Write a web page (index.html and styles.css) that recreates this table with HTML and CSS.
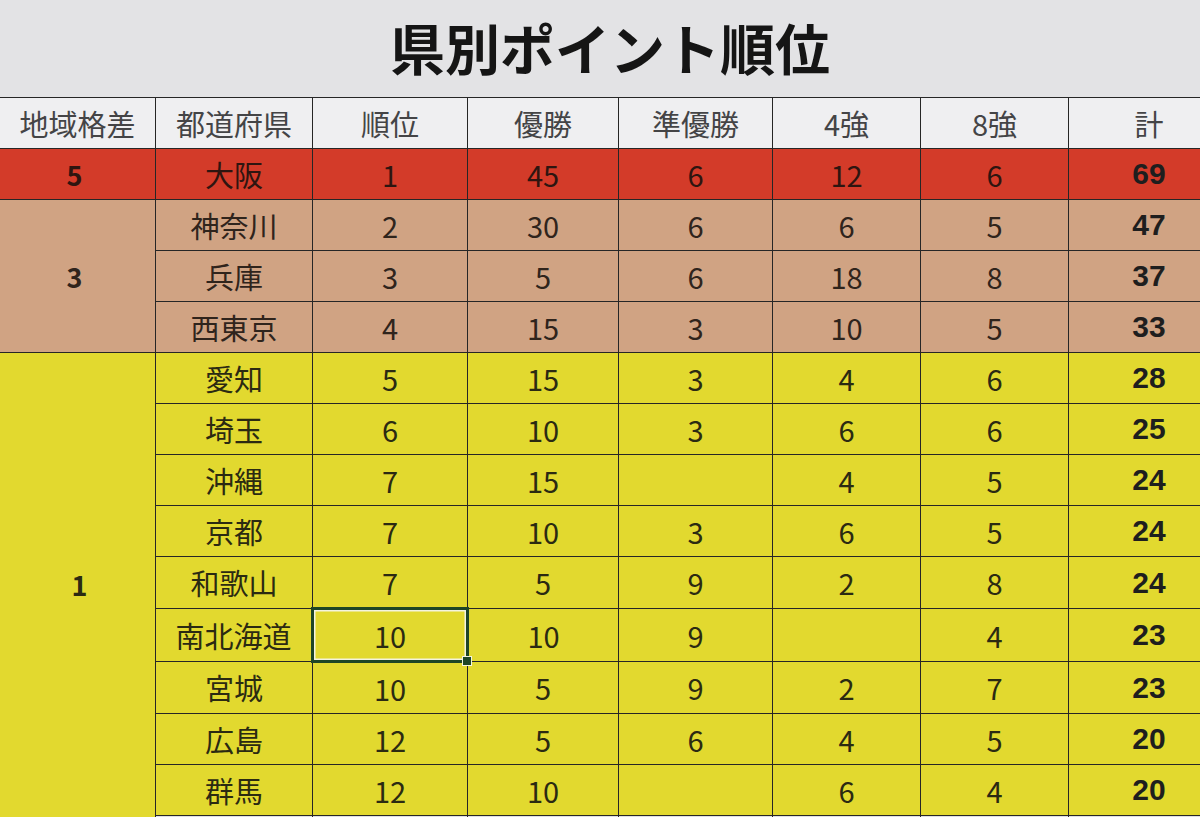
FILE: index.html
```html
<!DOCTYPE html>
<html lang="ja">
<head>
<meta charset="utf-8">
<title>県別ポイント順位</title>
<link rel="stylesheet" href="styles.css">
</head>
<body>
<div class="sheet">
  <h1 class="title">県別ポイント順位</h1>
  <table class="grid">
    <colgroup>
      <col class="c1"><col class="c2"><col class="c3"><col class="c4"><col class="c5"><col class="c6"><col class="c7"><col class="c8">
    </colgroup>
    <thead>
      <tr class="head">
        <th>地域格差</th><th>都道府県</th><th>順位</th><th>優勝</th><th>準優勝</th><th>4強</th><th>8強</th><th>計</th>
      </tr>
    </thead>
    <tbody>
      <tr class="red">
        <td class="region">5</td><td>大阪</td><td>1</td><td>45</td><td>6</td><td>12</td><td>6</td><td class="total">69</td>
      </tr>
      <tr class="tan">
        <td class="region" rowspan="3">3</td><td>神奈川</td><td>2</td><td>30</td><td>6</td><td>6</td><td>5</td><td class="total">47</td>
      </tr>
      <tr class="tan">
        <td>兵庫</td><td>3</td><td>5</td><td>6</td><td>18</td><td>8</td><td class="total">37</td>
      </tr>
      <tr class="tan">
        <td>西東京</td><td>4</td><td>15</td><td>3</td><td>10</td><td>5</td><td class="total">33</td>
      </tr>
      <tr class="yel">
        <td class="region region-one" rowspan="10">1</td><td>愛知</td><td>5</td><td>15</td><td>3</td><td>4</td><td>6</td><td class="total">28</td>
      </tr>
      <tr class="yel">
        <td>埼玉</td><td>6</td><td>10</td><td>3</td><td>6</td><td>6</td><td class="total">25</td>
      </tr>
      <tr class="yel">
        <td>沖縄</td><td>7</td><td>15</td><td></td><td>4</td><td>5</td><td class="total">24</td>
      </tr>
      <tr class="yel">
        <td>京都</td><td>7</td><td>10</td><td>3</td><td>6</td><td>5</td><td class="total">24</td>
      </tr>
      <tr class="yel">
        <td>和歌山</td><td>7</td><td>5</td><td>9</td><td>2</td><td>8</td><td class="total">24</td>
      </tr>
      <tr class="yel">
        <td>南北海道</td><td class="sel">10<span class="handle"></span></td><td>10</td><td>9</td><td></td><td>4</td><td class="total">23</td>
      </tr>
      <tr class="yel">
        <td>宮城</td><td>10</td><td>5</td><td>9</td><td>2</td><td>7</td><td class="total">23</td>
      </tr>
      <tr class="yel">
        <td>広島</td><td>12</td><td>5</td><td>6</td><td>4</td><td>5</td><td class="total">20</td>
      </tr>
      <tr class="yel">
        <td>群馬</td><td>12</td><td>10</td><td></td><td>6</td><td>4</td><td class="total">20</td>
      </tr>
      <tr class="plain">
        <td></td><td></td><td></td><td></td><td>2</td><td>5</td><td class="total">18</td>
      </tr>
    </tbody>
  </table>
</div>
</body>
</html>
```
FILE: styles.css
```css
html, body {
  margin: 0;
  padding: 0;
  background: #e3e3e5;
  overflow: hidden;
}

body {
  width: 1200px;
  height: 817px;
  font-family: "Noto Sans CJK JP", "Noto Sans", sans-serif;
  color: #2a2a2a;
}

.sheet {
  display: flex;
  flex-direction: column;
}

.title {
  margin: 0;
  height: 97px;
  line-height: 92px;
  padding-left: 20px;
  text-align: center;
  font-size: 55px;
  font-weight: 700;
  color: #151515;
  letter-spacing: 0;
}

.grid {
  border-collapse: collapse;
  table-layout: fixed;
  width: 1230px;
  margin-left: -1px;
}

.c1 { width: 156px; }
.c2 { width: 157px; }
.c3 { width: 155px; }
.c4 { width: 151px; }
.c5 { width: 154px; }
.c6 { width: 148px; }
.c7 { width: 148px; }
.c8 { width: 161px; }

.grid th,
.grid td {
  border: 1.5px solid #262626;
  text-align: center;
  vertical-align: middle;
  padding: 0;
  height: 50px;
  font-size: 29px;
  font-weight: 400;
  line-height: 1;
}

.head th {
  background: #efeff1;
  color: #444446;
  height: 50px;
}

.red td { background: #d33b29; color: #2e1510; }
.tan td { background: #d0a383; color: #2f241c; }
.yel td { background: #e2d92f; color: #2b2a12; }
.plain td { background: #dedfe2; color: #2a2a2a; }

.grid td.region {
  font-weight: 700;
  font-size: 27px;
  padding-right: 6px;
}

.red td.region { background: #d33b29; }
.tan td.region { background: #d0a383; }
.yel td.region { background: #e2d92f; }

.grid td.region-one {
  padding-bottom: 50px;
  padding-left: 10px;
}

.grid td.total {
  font-family: "Liberation Sans", "Noto Sans", sans-serif;
  font-weight: 700;
  font-size: 30px;
  color: #1e1e1e;
}

.grid td.sel {
  position: relative;
  border: 3px solid #1e4626;
  box-shadow: inset 0 0 0 1.5px #f4f4e0;
}

.handle {
  position: absolute;
  right: -6px;
  bottom: -6px;
  width: 8px;
  height: 8px;
  background: #1e4626;
  border: 1px solid #f4f4e0;
}
```
